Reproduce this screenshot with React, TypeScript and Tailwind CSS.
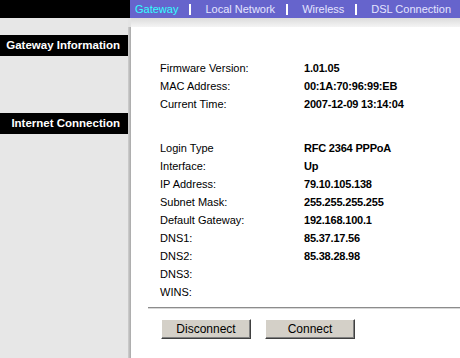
import React from 'react';

const navItems = ['Gateway', 'Local Network', 'Wireless', 'DSL Connection'];

const gatewayRows: [string, string][] = [
  ['Firmware Version:', '1.01.05'],
  ['MAC Address:', '00:1A:70:96:99:EB'],
  ['Current Time:', '2007-12-09 13:14:04'],
];

const internetRows: [string, string][] = [
  ['Login Type', 'RFC 2364 PPPoA'],
  ['Interface:', 'Up'],
  ['IP Address:', '79.10.105.138'],
  ['Subnet Mask:', '255.255.255.255'],
  ['Default Gateway:', '192.168.100.1'],
  ['DNS1:', '85.37.17.56'],
  ['DNS2:', '85.38.28.98'],
  ['DNS3:', ''],
  ['WINS:', ''],
];

const InfoRow = ({ label, value }: { label: string; value: string }) => (
  <div className="flex items-center h-[18px] pl-[29px] text-[11px] text-black">
    <span className="w-[144px]">{label}</span>
    <span className="font-bold tracking-[-0.2px]">{value}</span>
  </div>
);

const SectionBar = ({ title }: { title: string }) => (
  <div className="h-[21px] bg-black text-white font-bold text-[11.5px] flex items-center justify-end pr-[8px] whitespace-nowrap">
    {title}
  </div>
);

const ClassicButton = ({ children }: { children: React.ReactNode }) => (
  <button className="w-[90px] h-[20px] bg-[#d4d0c8] text-[12px] text-black border border-t-white border-l-white border-r-[#404040] border-b-[#404040] shadow-[inset_-1px_-1px_0_#808080]">
    {children}
  </button>
);

export default function App() {
  return (
    <div className="w-[460px] h-[358px] flex flex-col overflow-hidden bg-white font-['Liberation_Sans',Arial,sans-serif]">
      {/* top navigation */}
      <div className="flex h-[18px]">
        <div className="w-[130px] bg-black" />
        <nav className="flex-1 bg-[#6664cc] flex items-center pl-[5px] text-[11px] text-white whitespace-nowrap">
          {navItems.map((item, i) => (
            <React.Fragment key={item}>
              {i > 0 && (
                <span className="ml-[11px] mr-[14px] w-[2px] h-[11px] bg-white" />
              )}
              <span className={i === 0 ? 'text-[#33ffff]' : 'text-[#e4e4ff]'}>{item}</span>
            </React.Fragment>
          ))}
        </nav>
      </div>

      <div className="flex flex-1">
        {/* left column */}
        <aside className="w-[128px] bg-[#e7e7e7] pt-[17px]">
          <SectionBar title="Gateway Information" />
          <div className="h-[57px]" />
          <SectionBar title="Internet Connection" />
        </aside>
        <div className="w-[3px] flex flex-col">
          <div className="h-[9px] bg-[#e4e4e4]" />
          <div className="flex-1 bg-gradient-to-r from-[#d0d0d0] to-[#a8a8a8]" />
        </div>

        {/* content */}
        <main className="flex-1 flex flex-col">
          <div className="h-[9px] bg-gradient-to-b from-[#dcdcdc] to-[#f4f4f4]" />
          <div className="flex-1 bg-white pt-[32px]">
            {gatewayRows.map(([l, v]) => (
              <InfoRow key={l} label={l} value={v} />
            ))}
            <div className="h-[26px]" />
            {internetRows.map(([l, v]) => (
              <InfoRow key={l} label={l} value={v} />
            ))}
            <div className="ml-[17px] mt-[6px] h-[2px] border-t border-t-[#8c8c8c] border-b border-b-[#d8d8d8]" />
            <div className="flex gap-[14px] pl-[30px] mt-[10px]">
              <ClassicButton>Disconnect</ClassicButton>
              <ClassicButton>Connect</ClassicButton>
            </div>
          </div>
        </main>
      </div>
    </div>
  );
}
